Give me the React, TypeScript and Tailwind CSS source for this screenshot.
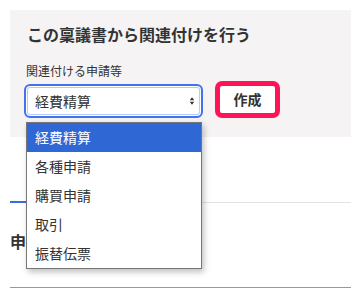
const options = ['経費精算', '各種申請', '購買申請', '取引', '振替伝票']

export default function App() {
  return (
    <div
      className="relative w-[351px] h-[289px] overflow-hidden bg-white pl-[10px] pt-[10px] text-[#333]"
      style={{ fontFamily: '"Noto Sans CJK JP", "Noto Sans", sans-serif' }}
    >
      {/* related-document panel */}
      <div className="bg-[#f5f3f4] pl-[17px] pt-[12px] pb-[19px]">
        <h2 className="text-[16px] leading-[24px] font-bold">この稟議書から関連付けを行う</h2>
        <div className="mt-[16px] text-[12px] leading-[18px] -ml-[1px]">関連付ける申請等</div>
        <div className="mt-[1px] flex items-end gap-[12px] -ml-[3px]">
          <div className="w-[179px] h-[34px] rounded-[6px] border-2 border-[#3f73f0] bg-white shadow-[inset_0_0_0_1px_#fff,inset_0_0_0_2px_#b5ccf8] flex items-center justify-between pl-[9px] pr-[6px]">
            <span className="text-[14px]">経費精算</span>
            <svg viewBox="0 0 8 12" className="w-[6px] h-[10px] text-[#333]">
              <path d="M4 1 L7 5 H1 Z M4 11 L7 7 H1 Z" fill="currentColor" />
            </svg>
          </div>
          <button className="w-[65px] h-[37px] rounded-[7px] border-[5px] border-[#ff1458] bg-white text-[14px] font-bold flex items-center justify-center">
            作成
          </button>
        </div>
      </div>

      {/* tabs */}
      <div className="mt-[65px] border-b border-[#e3e3e3] relative">
        <div className="absolute left-0 -bottom-[1px] w-[16px] h-[2px] bg-[#3a6be0]" />
      </div>
      <div className="mt-[26px] text-[16px] leading-[24px] font-bold">申請</div>
      <div className="mt-[34px] h-[20px] border-t border-[#999]" />

      {/* open select dropdown */}
      <ul className="absolute left-[26px] top-[122px] w-[176px] border border-[#767676] bg-white shadow-[2px_3px_6px_rgba(0,0,0,0.25)]">
        {options.map((o, i) => (
          <li
            key={o}
            className={
              i === 0
                ? 'h-[29px] pl-[8px] flex items-center text-[14px] bg-[#2f68d4] text-white'
                : 'h-[29px] pl-[8px] flex items-center text-[14px]'
            }
          >
            {o}
          </li>
        ))}
      </ul>
    </div>
  )
}
